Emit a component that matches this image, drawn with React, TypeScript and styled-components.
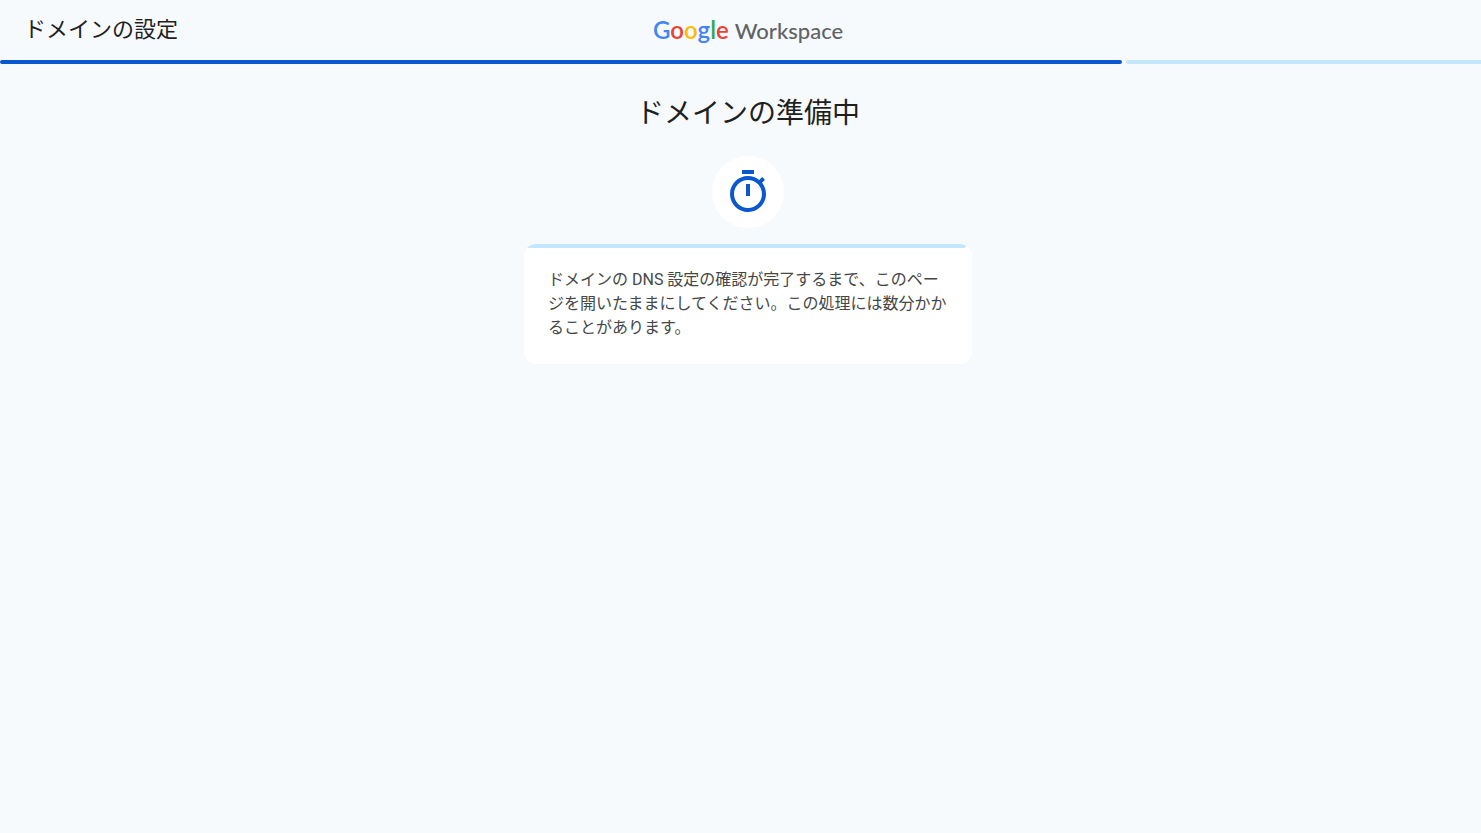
import React from "react";
import styled, { createGlobalStyle } from "styled-components";

const GlobalStyle = createGlobalStyle`
  html {
    background: #f7fafd;
    overflow-x: hidden;
  }
  body {
    margin: 0;
    color: #1f1f1f;
    font-family: Roboto, "Noto Sans CJK JP", sans-serif;
  }
`;

const Page = styled.div`
  width: calc(100% + 15px);
`;

const Header = styled.header`
  display: grid;
  grid-template-columns: 1fr auto 1fr;
  align-items: center;
  height: 60px;
  padding: 0 24px;
  box-sizing: border-box;
`;

const FlowName = styled.div`
  font-size: 22px;
  line-height: 28px;
`;

const Logo = styled.div`
  display: flex;
  align-items: baseline;
  gap: 6px;
  font-family: Lato, sans-serif;
  line-height: 32px;
`;

const Brand = styled.span`
  font-size: 24px;
  font-weight: 600;
`;

const Letter = styled.span<{ $color: string }>`
  color: ${(p) => p.$color};
`;

const Product = styled.span`
  font-size: 22px;
  font-weight: 500;
  color: #5f6368;
`;

const Steps = styled.div`
  display: grid;
  grid-template-columns: 3fr 1fr;
`;

const Step = styled.div<{ $done?: boolean }>`
  height: 4px;
  border-radius: 2px;
  margin-left: ${(p) => (p.$done ? 0 : 4)}px;
  background: ${(p) => (p.$done ? "#0b57d0" : "#c2e7ff")};
`;

const Main = styled.main`
  display: flex;
  flex-direction: column;
  align-items: center;
  padding: 32px 24px;
`;

const Title = styled.h1`
  margin: 0 0 24px;
  font-size: 28px;
  line-height: 36px;
  font-weight: 400;
`;

const IconDisc = styled.div`
  display: flex;
  align-items: center;
  justify-content: center;
  width: 72px;
  height: 72px;
  margin-bottom: 16px;
  border-radius: 50%;
  background: #fff;
`;

const Card = styled.section`
  width: 100%;
  max-width: 448px;
  border-radius: 12px;
  overflow: hidden;
  background: #fff;
`;

const LoadingBar = styled.div`
  height: 4px;
  margin-right: 6px;
  border-radius: 0 2px 2px 0;
  background: #c2e7ff;
`;

const Message = styled.p`
  margin: 0;
  padding: 20px 24px 24px;
  font-size: 16px;
  line-height: 24px;
  color: #444746;
`;

const BRAND_LETTERS = [
  ["G", "#4285f4"],
  ["o", "#ea4335"],
  ["o", "#fbbc04"],
  ["g", "#4285f4"],
  ["l", "#34a853"],
  ["e", "#ea4335"],
];

function TimerIcon() {
  return (
    <svg width="48" height="48" viewBox="0 0 24 24" fill="#0b57d0" aria-hidden="true">
      <path d="M15 1H9v2h6V1zm-4 13h2V8h-2v6zm8.03-6.61 1.42-1.42c-.43-.51-.9-.99-1.41-1.41l-1.42 1.42C16.07 4.74 14.12 4 12 4c-4.97 0-9 4.03-9 9s4.02 9 9 9 9-4.03 9-9c0-2.12-.74-4.07-1.97-5.61zM12 20c-3.87 0-7-3.13-7-7s3.13-7 7-7 7 3.13 7 7-3.13 7-7 7z" />
    </svg>
  );
}

export default function App() {
  return (
    <>
      <GlobalStyle />
      <Page lang="ja">
        <Header>
          <FlowName>ドメインの設定</FlowName>
          <Logo>
            <Brand>
              {BRAND_LETTERS.map(([letter, color], i) => (
                <Letter key={i} $color={color}>
                  {letter}
                </Letter>
              ))}
            </Brand>
            <Product>Workspace</Product>
          </Logo>
        </Header>
        <Steps>
          <Step $done />
          <Step />
        </Steps>
        <Main>
          <Title>ドメインの準備中</Title>
          <IconDisc>
            <TimerIcon />
          </IconDisc>
          <Card>
            <LoadingBar />
            <Message>
              ドメインの DNS 設定の確認が完了するまで、このページを開いたままにしてください。この処理には数分かかることがあります。
            </Message>
          </Card>
        </Main>
      </Page>
    </>
  );
}
